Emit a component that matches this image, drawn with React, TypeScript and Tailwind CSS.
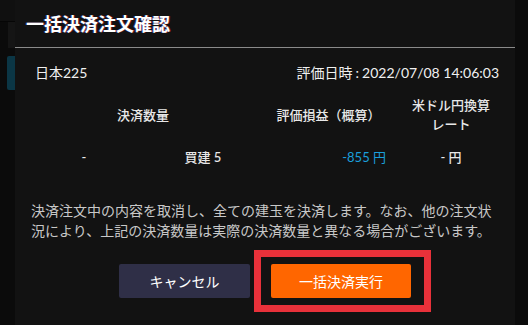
export default function App() {
  return (
    <div className="relative flex h-[325px] w-[528px] overflow-hidden bg-[#0b0b0b] font-['Lato','Noto_Sans_CJK_JP',sans-serif] text-[#f0f0f0]">
      {/* page behind the overlay */}
      <div className="flex w-[15px] shrink-0 flex-col">
        <div className="h-[22px] border-b border-[#060606] bg-[#101010]" />
        <div className="ml-[8px] h-[26px] bg-[#151515]" />
        <div className="ml-[7px] mt-[8px] h-[34px] rounded-l-[2px] bg-[#0b3645]" />
      </div>

      <div className="flex w-[500px] shrink-0 flex-col bg-[#121212]">
        <div className="flex h-[48px] items-center border-b border-[#8a8a8a] px-[11px]">
          <h1 className="text-[18px] font-bold leading-none text-white [text-shadow:-1px_0_rgba(40,110,255,0.45),1px_0_rgba(255,40,40,0.45)]">
            一括決済注文確認
          </h1>
        </div>

        <div className="flex items-center justify-between pl-[20px] pr-[16px] pt-[15px] text-[14px] leading-[20px]">
          <span>日本225</span>
          <span>
            評価日時<span className="mx-[3px]">:</span>2022/07/08 14:06:03
          </span>
        </div>

        <div className="mt-[13px] pl-[20px] text-[13px] font-medium leading-[19px] text-[#e8e8e8]">
          <div className="grid grid-cols-[216px_155px_90px] items-center">
            <div className="text-center">決済数量</div>
            <div className="text-center">評価損益（概算）</div>
            <div className="text-center">
              米ドル円換算
              <br />
              レート
            </div>
          </div>
          <div className="mt-[14px] grid grid-cols-[98px_140px_133px_90px] items-center">
            <div className="text-center">-</div>
            <div className="text-center">買建 5</div>
            <div className="pr-[20px] text-right font-normal text-[#1a9fdc]">-855 円</div>
            <div className="text-center">- 円</div>
          </div>
        </div>

        <p className="mt-[34px] px-[16px] text-[14px] leading-[20px] text-[#c8c8c8]">
          決済注文中の内容を取消し、全ての建玉を決済します。なお、他の注文状況により、上記の決済数量は実際の決済数量と異なる場合がございます。
        </p>

        <div className="mt-[23px] flex justify-center gap-[21px] text-[14px] text-white">
          <button className="h-[34px] w-[131px] rounded-[2px] bg-[#2f2f47]">キャンセル</button>
          <div className="relative">
            <button className="h-[34px] w-[140px] rounded-[2px] bg-[#ff6600]">一括決済実行</button>
            <div className="pointer-events-none absolute -bottom-[14px] -left-[17px] -right-[20px] -top-[14px] border-[7px] border-[#e8313a]" />
          </div>
        </div>
      </div>

      <div className="flex-1 bg-[#0b0b0b]" />
    </div>
  );
}
